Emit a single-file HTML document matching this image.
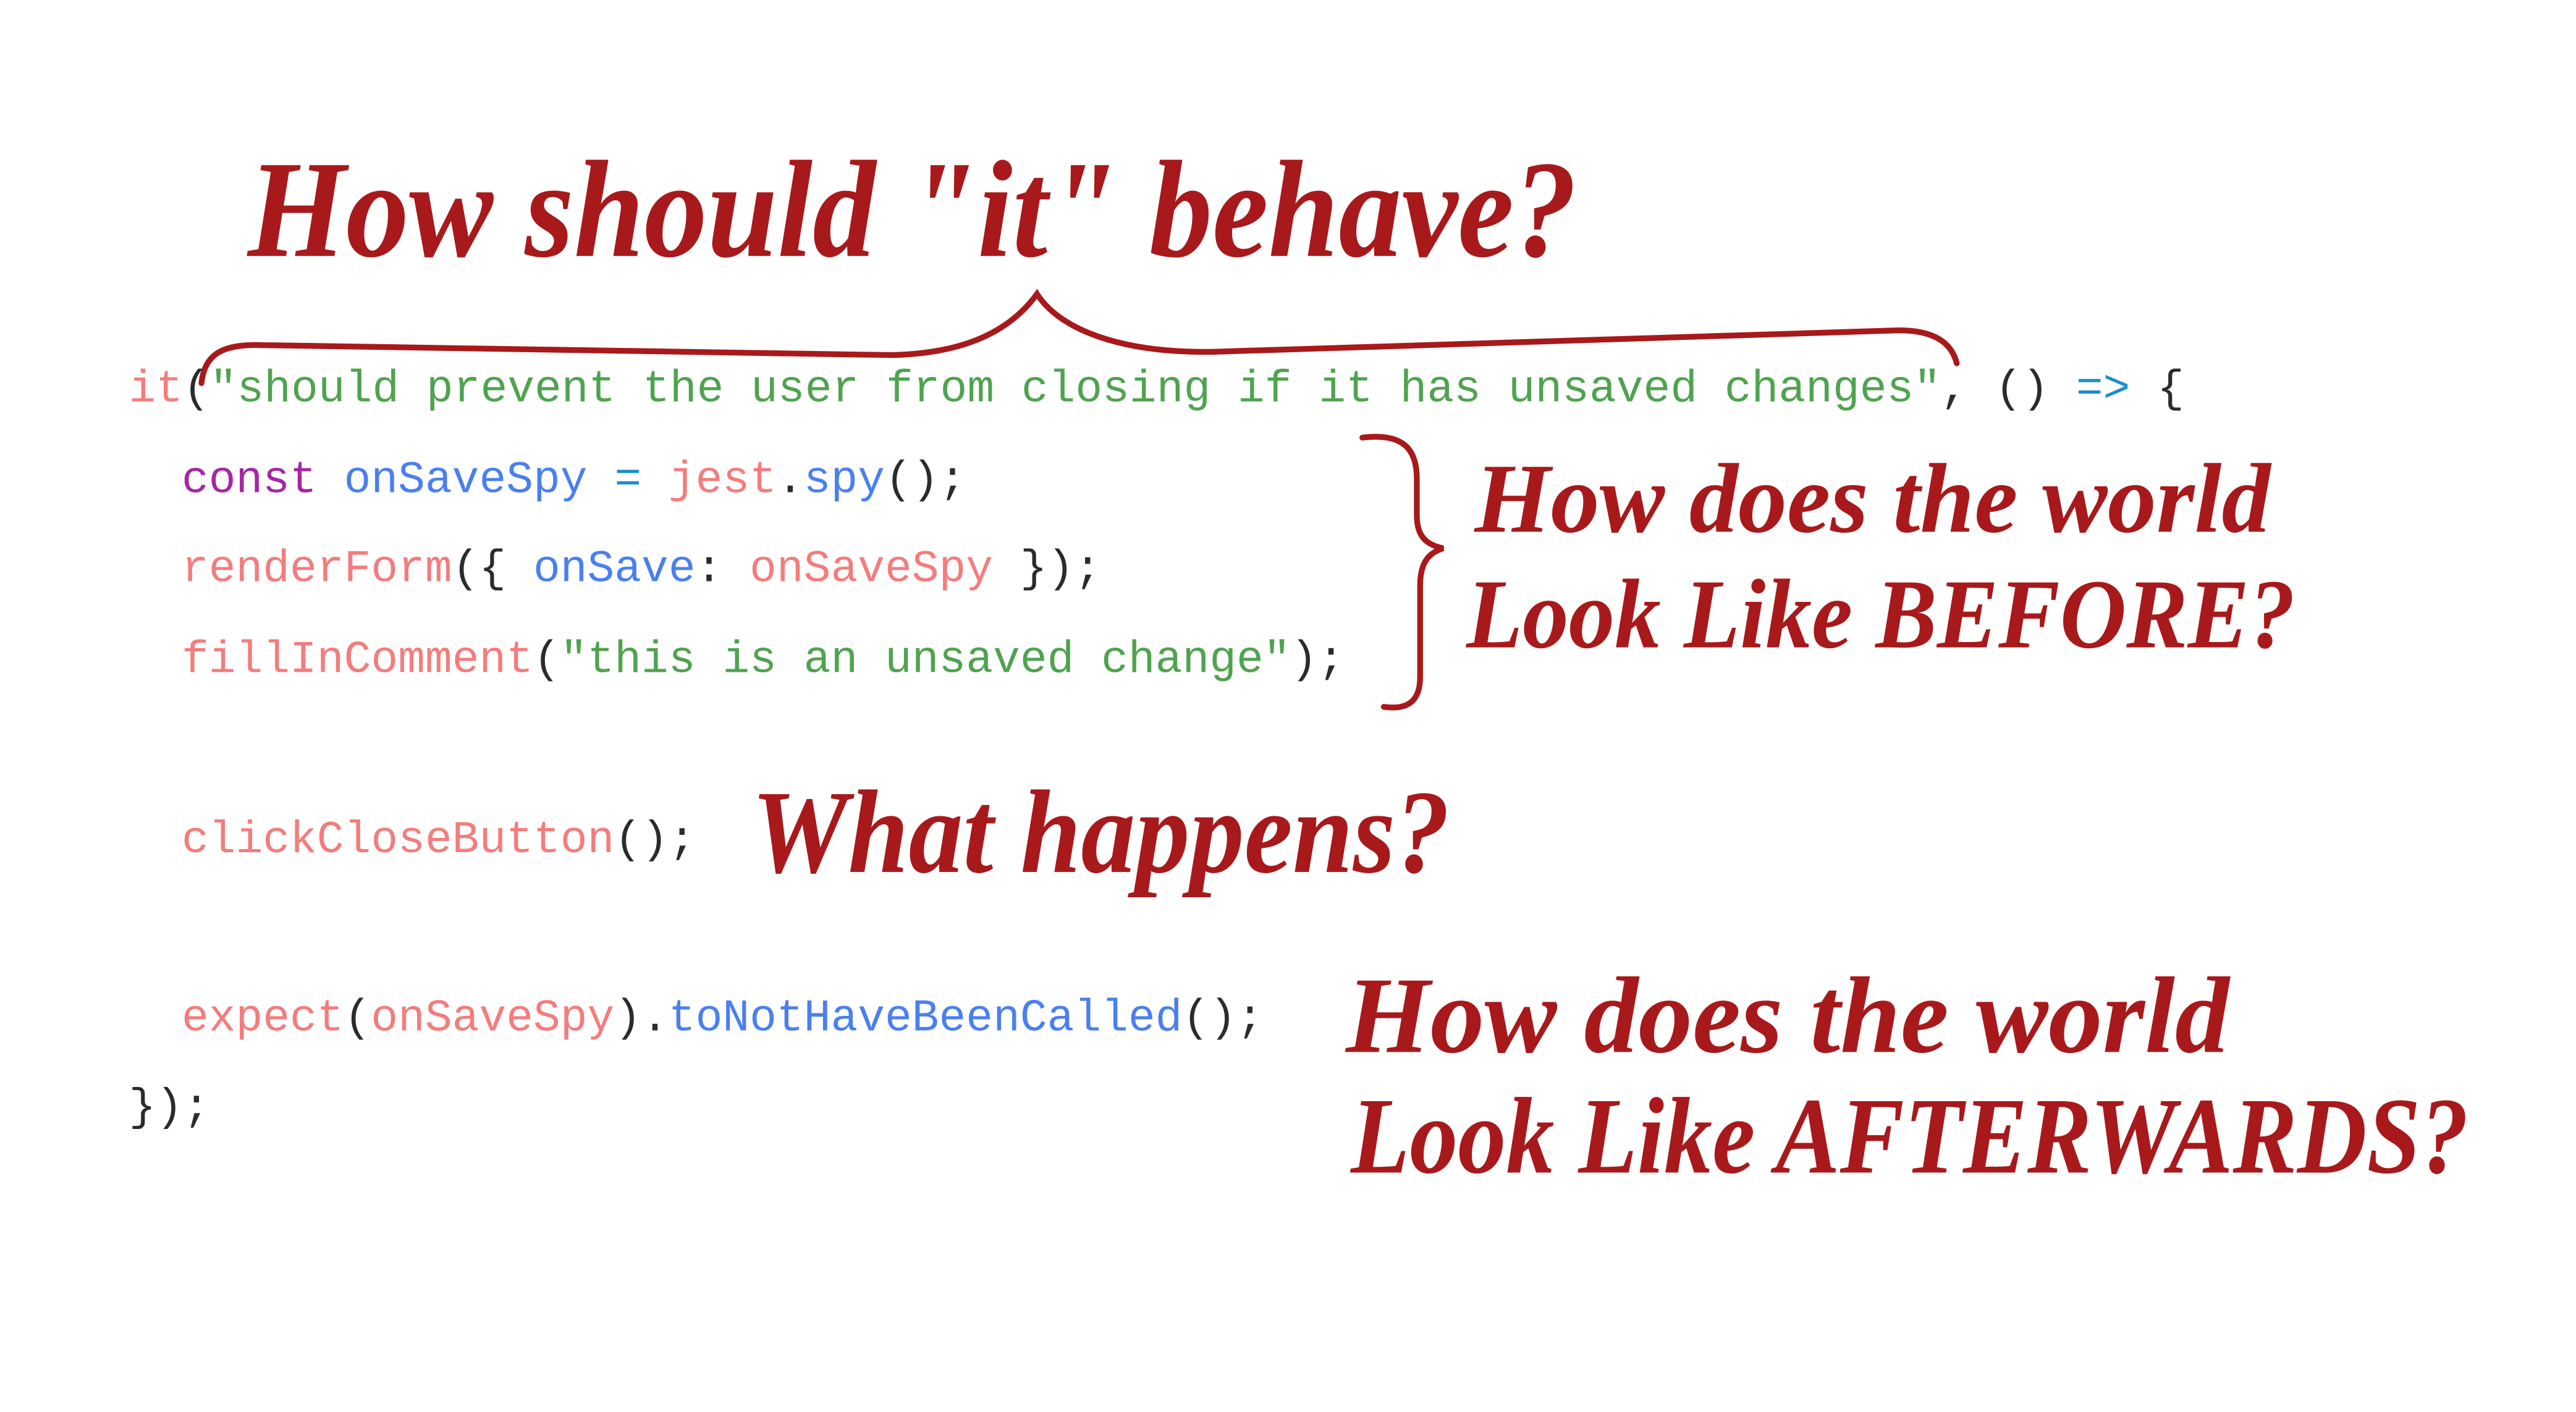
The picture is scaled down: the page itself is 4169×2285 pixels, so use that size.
<!DOCTYPE html>
<html><head><meta charset="utf-8"><style>
html,body{margin:0;padding:0;background:#fff;}
svg{display:block}
.c{font-family:"Liberation Mono",monospace;font-size:27.3px;white-space:pre}
.h{font-family:"Liberation Serif",serif;font-style:italic;font-weight:bold;fill:#a8191b}
.p{fill:#f47c7c}.g{fill:#4fa34f}.b{fill:#4a7ff0}.v{fill:#a626a4}.d{fill:#2b2b2b}.k{fill:#1a8fc9}
</style></head><body>
<svg width="4169" height="2285" viewBox="0 0 1560 855" xmlns="http://www.w3.org/2000/svg">
<rect width="1560" height="855" fill="#fff"/>
<g class="c" xml:space="preserve">
<text x="78" y="243"><tspan class="p">it</tspan><tspan class="d">(</tspan><tspan class="g">"should prevent the user from closing if it has unsaved changes"</tspan><tspan class="d">, () </tspan><tspan class="k">=&gt;</tspan><tspan class="d"> {</tspan></text>
<text x="110" y="298"><tspan class="v">const</tspan><tspan class="d"> </tspan><tspan class="b">onSaveSpy</tspan><tspan class="d"> </tspan><tspan class="k">=</tspan><tspan class="d"> </tspan><tspan class="p">jest</tspan><tspan class="d">.</tspan><tspan class="b">spy</tspan><tspan class="d">();</tspan></text>
<text x="110" y="352"><tspan class="p">renderForm</tspan><tspan class="d">({ </tspan><tspan class="b">onSave</tspan><tspan class="d">: </tspan><tspan class="p">onSaveSpy</tspan><tspan class="d"> });</tspan></text>
<text x="110" y="407"><tspan class="p">fillInComment</tspan><tspan class="d">(</tspan><tspan class="g">"this is an unsaved change"</tspan><tspan class="d">);</tspan></text>
<text x="110" y="516"><tspan class="p">clickCloseButton</tspan><tspan class="d">();</tspan></text>
<text x="110" y="624"><tspan class="p">expect</tspan><tspan class="d">(</tspan><tspan class="p">onSaveSpy</tspan><tspan class="d">).</tspan><tspan class="b">toNotHaveBeenCalled</tspan><tspan class="d">();</tspan></text>
<text x="78" y="678"><tspan class="d">});</tspan></text>
</g>
<g class="h">
<text x="150" y="155" font-size="84" textLength="805" lengthAdjust="spacingAndGlyphs">How should "it" behave?</text>
<text x="893" y="322" font-size="60" textLength="482" lengthAdjust="spacingAndGlyphs">How does the world</text>
<text x="888" y="392" font-size="60" textLength="502" lengthAdjust="spacingAndGlyphs">Look Like BEFORE?</text>
<text x="455" y="528" font-size="72" textLength="423" lengthAdjust="spacingAndGlyphs">What happens?</text>
<text x="815" y="637" font-size="66" textLength="535" lengthAdjust="spacingAndGlyphs">How does the world</text>
<text x="818" y="710" font-size="66" textLength="677" lengthAdjust="spacingAndGlyphs">Look Like AFTERWARDS?</text>
</g>
<g fill="none" stroke="#a8191b" stroke-width="3.5" stroke-linecap="round">
<path d="M122 232 C124 214 135 208 160 209 L540 215 C585 214 612 200 628 178 C642 200 680 214 735 213 L1150 200 C1172 200 1182 208 1185 220"/>
<path d="M825 265 C850 262 858 272 858 290 L858 312 C858 325 864 330 874 332 C864 335 860 342 860 355 L860 410 C860 425 852 430 838 428"/>
</g>
</svg>
</body></html>
